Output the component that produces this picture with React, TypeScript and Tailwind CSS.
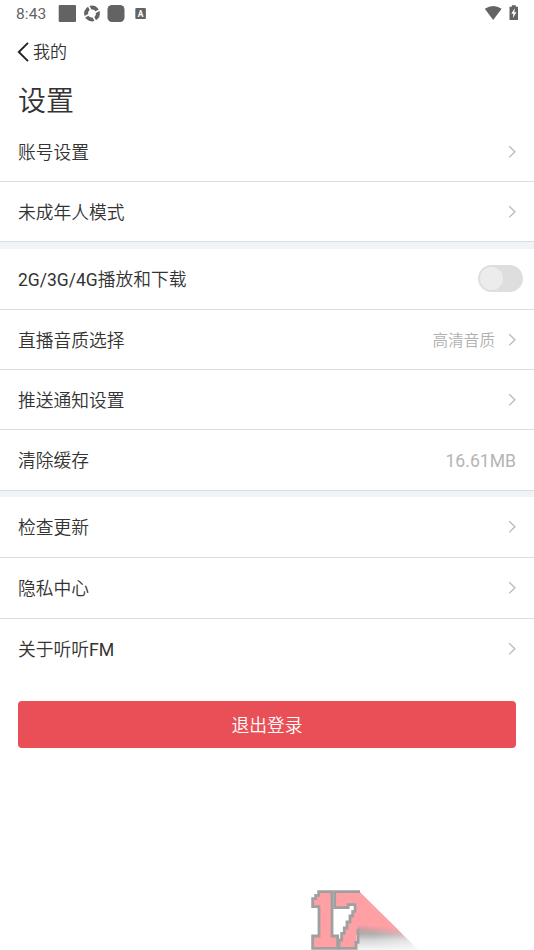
import React from "react";

function Chevron() {
  return (
    <svg width="9" height="14" viewBox="0 0 9 14" className="mr-[17px] shrink-0" fill="none">
      <path d="M1.2 1.2 L6.9 6.8 L1.2 12.4" stroke="#b8b8b8" strokeWidth="1.3" />
    </svg>
  );
}

type RowProps = {
  label: React.ReactNode;
  height: string;
  border?: boolean;
  children?: React.ReactNode;
};

function Row({ label, height, border = true, children }: RowProps) {
  return (
    <div
      className={`flex shrink-0 items-center justify-between pl-[18px] ${height} ${
        border ? "border-b border-[#dcdddf]" : ""
      }`}
    >
      <span className="pt-[2px] text-[17.75px] leading-6 text-[#333]">{label}</span>
      <div className="flex items-center">{children}</div>
    </div>
  );
}

function StatusBar() {
  return (
    <header className="flex h-7 shrink-0 items-center pl-4 text-[#636363]">
      <span className="w-[42px] text-[15.5px] leading-5 font-normal tracking-[0.1px]">8:43</span>
      <svg width="90" height="20" viewBox="0 0 90 20" fill="#636363">
        <rect x="0.7" y="1" width="17.3" height="17" rx="1" />
        <circle cx="34" cy="9.5" r="5.9" fill="none" stroke="#636363" strokeWidth="4" />
        <g stroke="#fff" strokeWidth="1.6">
          <path d="M30 1 L33 6.5" />
          <path d="M42.5 5.5 L37 8.5" />
          <path d="M38 18 L35 12.5" />
          <path d="M25.5 13.5 L31 10.5" />
        </g>
        <rect x="49.5" y="1" width="17" height="17" rx="4.5" />
        <rect x="77.3" y="4" width="10.6" height="11" rx="1" />
        <text x="82.6" y="12.7" fill="#fff" fontSize="8.5" fontWeight="700" textAnchor="middle">A</text>
      </svg>
      <svg width="40" height="20" viewBox="0 0 40 20" className="ml-auto mr-[14px]" fill="#636363">
        <path d="M4.8 4.8 Q13.2 -0.8 21.6 4.8 L13.2 16 Z" />
        <path d="M29.5 2.7 H31.8 V1.2 H35.8 V2.7 H38 V16 H29.5 Z" />
        <path d="M34.7 4.3 L31.3 9.8 H33.4 L32.9 14 L36.5 8.3 H34.4 Z" fill="#fff" />
      </svg>
    </header>
  );
}

function Watermark() {
  return (
    <svg width="150" height="80" viewBox="0 0 450 240" className="ml-[290px] mt-auto shrink-0">
      <defs>
        <linearGradient id="shade" gradientUnits="userSpaceOnUse" x1="0" y1="172" x2="0" y2="240">
          <stop offset="0" stopColor="#9c9c9c" />
          <stop offset="0.3" stopColor="#b0b0b0" />
          <stop offset="0.6" stopColor="#dadada" />
          <stop offset="1" stopColor="#f6f6f6" />
        </linearGradient>
        <linearGradient id="fade" gradientUnits="userSpaceOnUse" x1="200" y1="0" x2="380" y2="0">
          <stop offset="0.3" stopColor="#fff" stopOpacity="0" />
          <stop offset="1" stopColor="#fff" stopOpacity="0.4" />
        </linearGradient>
        <linearGradient id="pink" gradientUnits="userSpaceOnUse" x1="205" y1="162" x2="202" y2="190">
          <stop offset="0" stopColor="#ffa0a5" />
          <stop offset="1" stopColor="#ffa0a5" stopOpacity="0" />
        </linearGradient>
      </defs>
      <path d="M205 62 L385 240 H200 Z" fill="url(#shade)" />
      <path d="M205 62 L385 240 H200 Z" fill="url(#fade)" />
      <path d="M205 62 L385 240 H200 Z" fill="url(#pink)" />
      <g stroke="#a0a0a0" strokeWidth="8.5" strokeLinejoin="miter">
        <path
          fill="#ffa0a5"
          d="M86 65 H126 V198 H143 V235 H68 V198 H87 V110 H68 V86 H77 V76 H86 Z"
        />
        <path
          fill="#ffa0a5"
          d="M134 65 H210 V165 H204 V195 H199 V235 H146 V210 H155 V190 H162 V174 H170 V156 H178 V138 H186 V124 H194 V104 H180 V113 H134 Z"
          stroke="none"
        />
        <path
          fill="none"
          d="M210 65 H134 V113 H174 V104 H195 V124 H188 V138 H180 V156 H171 V174 H163 V190 H155 V210 H147 V235 H198 V217 H204 V176"
        />
      </g>
      <path d="M179 109 H190 V121 H182 V113 H179 Z" fill="#fff" />
    </svg>
  );
}

export default function App() {
  return (
    <main className="flex h-[950px] w-[534px] flex-col overflow-hidden bg-white font-['Roboto','Noto_Sans_CJK_SC',sans-serif] font-[350]">
      <StatusBar />
      <nav className="flex h-12 shrink-0 items-center pl-[17px] text-[#333]">
        <svg width="13" height="22" viewBox="0 0 13 22" fill="none">
          <path d="M11 1.8 L1.8 11 L11 20.2" stroke="#222" strokeWidth="1.9" />
        </svg>
        <span className="ml-[3px] text-[17px] leading-6">我的</span>
      </nav>
      <h1 className="flex h-[45px] shrink-0 items-center pl-[18px] pt-[6px] text-[28px] leading-9 font-[350] text-[#333]">
        设置
      </h1>
      <Row label="账号设置" height="h-[61px] pt-[2px]"><Chevron /></Row>
      <Row label="未成年人模式" height="h-[60px]"><Chevron /></Row>
      <div className="h-[7px] shrink-0 bg-[#f1f4f7]" />
      <Row
        label={<><span className="text-[17.5px] font-normal">2G/3G/4G</span>播放和下载</>}
        height="h-[61px]"
      >
        <div className="mr-[11px] mb-[2px] flex h-[27px] w-[45px] items-center rounded-full bg-[#dedede] p-0.5">
          <div className="size-[23px] rounded-full bg-[#ececec]" />
        </div>
      </Row>
      <Row label="直播音质选择" height="h-[60px]">
        <span className="mr-[13px] pt-[2px] text-[15.6px] leading-6 text-[#b0b0b0]">高清音质</span>
        <Chevron />
      </Row>
      <Row label="推送通知设置" height="h-[60px]"><Chevron /></Row>
      <Row label="清除缓存" height="h-[61px]">
        <span className="mr-[18px] pt-[2px] text-[17.6px] leading-6 font-normal text-[#b5b5b5]">16.61MB</span>
      </Row>
      <div className="h-[6px] shrink-0 bg-[#f1f4f7]" />
      <Row label="检查更新" height="h-[61px]"><Chevron /></Row>
      <Row label="隐私中心" height="h-[61px]"><Chevron /></Row>
      <Row
        label={<>关于听听<span className="font-normal">FM</span></>}
        height="h-[60px]"
        border={false}
      >
        <Chevron />
      </Row>
      <button className="mx-[18px] mt-[22px] h-[47px] shrink-0 rounded-[4px] bg-[#e94f56] pt-[2px] text-[17.8px] leading-6 text-white">
        退出登录
      </button>
      <Watermark />
    </main>
  );
}
